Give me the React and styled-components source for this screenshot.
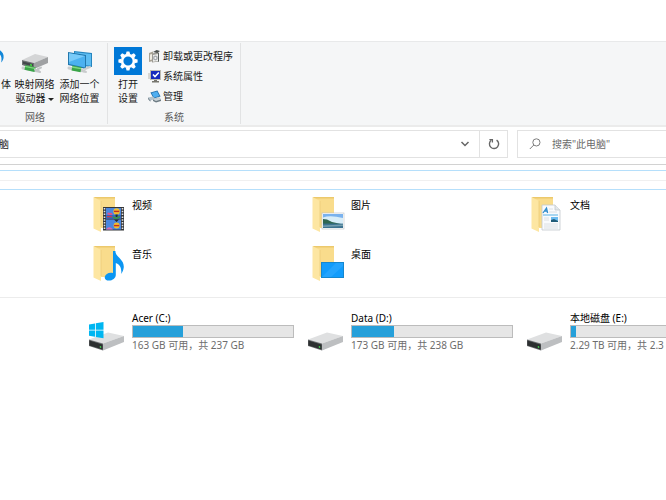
import React from 'react';
import styled, { createGlobalStyle } from 'styled-components';

const folders = [
  { name: '视频', kind: 'video' },
  { name: '图片', kind: 'picture' },
  { name: '文档', kind: 'document' },
  { name: '音乐', kind: 'music' },
  { name: '桌面', kind: 'desktop' },
];

const drives = [
  { name: 'Acer (C:)', info: '163 GB 可用，共 237 GB', used: 31, system: true },
  { name: 'Data (D:)', info: '173 GB 可用，共 238 GB', used: 26 },
  { name: '本地磁盘 (E:)', info: '2.29 TB 可用，共 2.3', used: 3 },
];

/* Icons */

const MediaIcon = () => (
  <svg width="12" height="28" viewBox="0 0 12 28" aria-hidden="true">
    <path d="M0 3.2C2.4 4.8 4 7.4 3.6 10.6C3.4 12.6 2.4 14.4 1.2 15.4C1.8 12 1.6 9 0 7.4Z" fill="#1287d8" />
  </svg>
);

const NetworkDriveIcon = () => (
  <svg width="28" height="28" viewBox="0 0 28 28" aria-hidden="true">
    <path d="M1 13L14 7L27 10L13 16Z" fill="#d4d5d6" />
    <path d="M13 16L27 10V16L13 22Z" fill="#9fa1a3" />
    <path d="M1 13L13 16V22L1 18Z" fill="#6d7072" />
    <path d="M2 14.4L12 17V19.6L2 16.8Z" fill="#43474a" />
    <path d="M9 17l2 .5v1.6l-2-.5z" fill="#3fe03f" />
    <path d="M2 21L17 24" stroke="#c9cbcc" strokeWidth="3" strokeLinecap="round" />
    <path d="M4 20.4L14 22.6" stroke="#3aa548" strokeWidth="5" />
    <path d="M4 19.4L14 21.4" stroke="#7ed67f" strokeWidth="1.4" />
    <path d="M14 22.6L19 25M17 22L20 20.6" stroke="#c2c5c6" strokeWidth="2" strokeLinecap="round" />
  </svg>
);

const NetworkPlaceIcon = () => (
  <svg width="28" height="28" viewBox="0 0 28 28" aria-hidden="true">
    <path d="M8 4L26 6V20L8 18Z" fill="#2585bf" />
    <path d="M9 5.2L25 7V18.8L9 17Z" fill="#5dbdf2" />
    <path d="M2 5L20 8V22L2 18Z" fill="#2277ac" />
    <path d="M3 6.2L19 9V20.6L3 17Z" fill="#4bb1f0" />
    <path d="M3 6.2L19 9L3 15Z" fill="#79cbf9" />
    <path d="M3 21L18 24" stroke="#c9cccd" strokeWidth="3" strokeLinecap="round" />
    <path d="M6 21L15 22.8" stroke="#3aa548" strokeWidth="5" />
    <path d="M6 20L15 21.6" stroke="#82d985" strokeWidth="1.4" />
    <path d="M19 22L24 20M17 24L20 25" stroke="#c9cccd" strokeWidth="2" strokeLinecap="round" />
  </svg>
);

const SettingsIcon = () => (
  <svg width="28" height="28" viewBox="0 0 28 28" aria-hidden="true">
    <rect width="28" height="28" fill="#0078d7" />
    {[0, 45, 90, 135, 180, 225, 270, 315].map((angle) => (
      <path
        key={angle}
        d="M11.8 7.4L12.6 4.4H15.4L16.2 7.4Z"
        fill="#fff"
        transform={`rotate(${angle} 14 14)`}
      />
    ))}
    <circle cx="14" cy="14" r="5.9" fill="none" stroke="#fff" strokeWidth="2.6" />
  </svg>
);

const UninstallIcon = () => (
  <svg width="13" height="13" viewBox="0 0 13 13" aria-hidden="true">
    <path d="M1 3L5 1.5V11L1 12Z" fill="#a8a294" />
    <path d="M2 4.5L4 4V9.6L2 10Z" fill="#efece2" />
    <path d="M4 3.4L10 2L11 3V11.6L4 12.6Z" fill="#9b9a94" />
    <path d="M5 5L10 4V11L5 11.8Z" fill="#efefed" />
    <circle cx="7.4" cy="8" r="2.4" fill="#a7abaf" />
    <circle cx="7.4" cy="8" r="1" fill="#f8f8f8" />
    <path d="M5 2L8.6 0L12 1L9.4 3Z" fill="#4b504e" />
    <path d="M10.5 3V11.6" stroke="#59605e" />
  </svg>
);

const PropertiesIcon = () => (
  <svg width="13" height="13" viewBox="0 0 13 13" aria-hidden="true">
    <path d="M0 4H2M0 6H2M0 8H2" stroke="#b9b6ad" />
    <rect x="2" y="0" width="11" height="10" fill="#bcbab0" />
    <rect x="3" y="1" width="9" height="8" fill="#1629bd" />
    <path d="M5 4.4L7 6.6L10.8 2.4" fill="none" stroke="#fff" strokeWidth="1.5" />
    <path d="M6 10H9V11H11V12.4H4V11H6Z" fill="#77766f" />
  </svg>
);

const ManageIcon = () => (
  <svg width="13" height="13" viewBox="0 0 13 13" aria-hidden="true">
    <path d="M2.4 2.4L9.4 .6L12.6 6.4L5.6 8.4Z" fill="#2673ad" />
    <path d="M3.6 3L9 1.6L11.4 6L6 7.4Z" fill="#4eaef0" />
    <path d="M0 7.6L5 6.4L7.6 9L2.4 10.6Z" fill="#b3c2cb" />
    <path d="M0 7.6L2.4 10.6V11.8L0 9Z" fill="#667782" />
    <path d="M5 9.4L11 7.6L13 9.4V11L8 12.6L5 11Z" fill="#6d7b83" />
    <path d="M5 9.4L11 7.6L13 9.4L8 11Z" fill="#c9d2d6" />
  </svg>
);

const ChevronIcon = () => (
  <svg width="10" height="8" viewBox="0 0 10 8" aria-hidden="true">
    <path d="M1.5 2L5 5.5L8.5 2" fill="none" stroke="#666" strokeWidth="1.5" />
  </svg>
);

const RefreshIcon = () => (
  <svg width="12" height="12" viewBox="0 0 12 12" aria-hidden="true">
    <path d="M8.6 2.1A4.6 4.6 0 1 1 3.2 2.3" fill="none" stroke="#666" strokeWidth="1.4" />
    <path d="M1.4 1.6H4.4V4.6" fill="none" stroke="#666" strokeWidth="1.3" />
  </svg>
);

const SearchIcon = () => (
  <svg width="12" height="12" viewBox="0 0 12 12" aria-hidden="true">
    <circle cx="7.4" cy="4.4" r="3.6" fill="none" stroke="#7c7c7c" />
    <path d="M4.8 7L.8 11" stroke="#7c7c7c" />
  </svg>
);

// What lies over the lower right part of each folder
const overlays = {
  video: (
    <g>
      <rect x="15" y="10" width="21" height="23.5" fill="#343638" />
      <path d="M16.5 11V33M34.5 11V33" stroke="#e4e4e4" strokeWidth="1.6" strokeDasharray="1.5 1.3" />
      <rect x="18" y="11" width="15" height="10.5" fill="#4a86e0" />
      <rect x="18" y="22.5" width="15" height="10" fill="#4a86e0" />
      <path d="M18 18H33V21.5H18Z" fill="#3566c0" />
      <circle cx="28.6" cy="14.4" r="3.2" fill="#f0bd2c" />
      <path d="M26 14.4H31.2" stroke="#c52a24" strokeWidth="1.4" />
      <path d="M27.4 17.6H29.8L29.4 20H27.8Z" fill="#1f3a22" />
      <path d="M19 17Q20 14.6 22 16Q24 15 24.6 17.4Q22 19 19 17Z" fill="#d8538e" />
      <path d="M19 19.6H24" stroke="#c53b4f" strokeWidth="1.4" />
      <path d="M25 20L28 21.4L32 19.6" stroke="#3f9a3c" strokeWidth="1.4" fill="none" />
      <circle cx="28.6" cy="28.6" r="3" fill="#f0bd2c" />
      <path d="M26 28.6H31.2" stroke="#c52a24" strokeWidth="1.4" />
      <path d="M18 32.5Q21 28 25 32.5Z" fill="#d76bb2" />
      <path d="M26 22.5H31L28.6 25Z" fill="#262a28" />
    </g>
  ),
  picture: (
    <g>
      <rect x="15" y="16" width="22" height="16" fill="#fff" stroke="#b9bec2" strokeWidth=".6" />
      <rect x="16" y="17" width="20" height="14" fill="#7ab2ee" />
      <path d="M16 20.5Q23 18 36 21V27H16Z" fill="#d8edf8" />
      <path d="M16 22L20 22.4L25 25L34 27H16Z" fill="#2f6651" />
      <path d="M16 26.6H36V31H16Z" fill="#3c7290" />
      <path d="M16 28.6L36 27.4V29L16 30Z" fill="#759fae" />
    </g>
  ),
  document: (
    <g>
      <path d="M16 8H29L34 13V33H16Z" fill="#f9fbfd" stroke="#c3c9cd" strokeWidth=".8" />
      <path d="M29 8V13H34" fill="#e3e8ec" stroke="#c3c9cd" strokeWidth=".8" />
      <path d="M17 16L20.5 11L21.6 16M18.5 14H21.5" fill="none" stroke="#318ccc" strokeWidth="1.3" />
      <path d="M17 18H32" stroke="#57b0e4" />
      <path d="M23 12H27M23 15H31M18 21H23M18 23H23M18 27H32M18 29H32M18 31H32" stroke="#d6dadd" strokeWidth=".8" />
      <rect x="25" y="20" width="7" height="5" fill="#6bbcf1" />
      <path d="M25 23L28 22L32 24V25H25Z" fill="#205c79" />
    </g>
  ),
  music: (
    <g>
      <path
        d="M25 5H27.4C27.4 11 36 13 35.8 21C35.6 24 34.4 26 33.2 28C34 21 31 18 27.8 17V29C27.8 32 24.6 34.6 21 34.6C18 34.6 16.4 33 16.8 30.8C17.4 27.8 21 26 25 27Z"
        fill="#0c96f2"
      />
    </g>
  ),
  desktop: (
    <g>
      <rect x="14" y="16" width="23" height="16" fill="#1587cf" />
      <rect x="15" y="17" width="21" height="14" fill="#129cfb" />
      <path d="M15 31L29 17H36V20L24 31Z" fill="#24a4fd" />
    </g>
  ),
};

const FolderIcon = ({ kind }) => (
  <svg width="38" height="36" viewBox="0 0 38 36" aria-hidden="true">
    <path d="M6 0H27V31H12Z" fill="#ecc96c" />
    <path d="M8 1.4H27V31H12Z" fill="#f9dc8c" />
    <path d="M5.5 0L13 4V35L5.5 31.4Z" fill="#fde6a2" />
    <path d="M13 4V30" stroke="#e9c875" strokeWidth=".7" />
    {overlays[kind]}
  </svg>
);

const DriveIcon = ({ system }) => (
  <svg width="38" height="30" viewBox="0 0 38 30" aria-hidden="true">
    <path d="M1 18.6L20 11.6L36 15L15 22.6Z" fill="#dfe0e1" />
    <path d="M15 22.6L36 15V21L15 29.4Z" fill="#bdbfc1" />
    <path d="M1 18.6L15 22.6V29.4L1 25Z" fill="#6c6f71" />
    <path d="M1.4 19.6L14.6 23.4V28.4L1.4 24.4Z" fill="#2c2f30" />
    <path d="M11.8 25L13.2 25.4V27L11.8 26.5Z" fill="#45e352" />
    {system && (
      <g fill="#00b6f1">
        <path d="M1 3.4L7 2.4V8.8H1Z" />
        <path d="M7.8 2.2L15.5 1V8.8H7.8Z" />
        <path d="M1 9.6H7V15.8L1 14.8Z" />
        <path d="M7.8 9.6H15.5V17.2L7.8 16Z" />
      </g>
    )}
  </svg>
);

/* Page */

const App = () => (
  <>
    <GlobalStyle />
    <Window>
      <Ribbon>
        <Group>
          <Tools>
            <CutButton type="button">
              <MediaIcon />
              <span>体</span>
            </CutButton>
            <BigButton type="button">
              <NetworkDriveIcon />
              <span>映射网络</span>
              <span>
                驱动器
                <Caret />
              </span>
            </BigButton>
            <BigButton type="button">
              <NetworkPlaceIcon />
              <span>添加一个</span>
              <span>网络位置</span>
            </BigButton>
          </Tools>
          <GroupName $shift>网络</GroupName>
        </Group>
        <Group>
          <Tools $inset>
            <SettingsButton type="button">
              <SettingsIcon />
              <span>打开</span>
              <span>设置</span>
            </SettingsButton>
            <SmallList>
              <SmallButton type="button">
                <UninstallIcon />
                卸载或更改程序
              </SmallButton>
              <SmallButton type="button">
                <PropertiesIcon />
                系统属性
              </SmallButton>
              <SmallButton type="button">
                <ManageIcon />
                管理
              </SmallButton>
            </SmallList>
          </Tools>
          <GroupName>系统</GroupName>
        </Group>
      </Ribbon>

      <Navigation>
        <AddressBox>
          <AddressInput type="text" aria-label="地址" defaultValue="脑" />
          <IconButton type="button" aria-label="展开">
            <ChevronIcon />
          </IconButton>
          <IconButton type="button" aria-label="刷新" $divided>
            <RefreshIcon />
          </IconButton>
        </AddressBox>
        <SearchBox>
          <SearchIcon />
          <SearchInput type="text" aria-label="搜索" placeholder={'搜索"此电脑"'} />
        </SearchBox>
      </Navigation>

      <HeaderBand />

      <FolderGrid>
        {folders.map((folder) => (
          <Folder key={folder.name}>
            <FolderIcon kind={folder.kind} />
            <FolderName>{folder.name}</FolderName>
          </Folder>
        ))}
      </FolderGrid>

      <DriveGrid>
        {drives.map((drive) => (
          <Drive key={drive.name}>
            <DriveIcon system={drive.system} />
            <DriveBody>
              <DriveName>{drive.name}</DriveName>
              <Bar>
                <BarFill style={{ width: `${drive.used}%` }} />
              </Bar>
              <DriveInfo>{drive.info}</DriveInfo>
            </DriveBody>
          </Drive>
        ))}
      </DriveGrid>
    </Window>
  </>
);

/* Styles */

const GlobalStyle = createGlobalStyle`
  * {
    box-sizing: border-box;
  }

  body {
    margin: 0;
    background: #fff;
    color: #1a1a1a;
    font-family: 'Noto Sans', 'Noto Sans CJK SC', sans-serif;
    font-size: 10px;
    line-height: 14px;
  }

  button,
  input {
    padding: 0;
    border: 0;
    background: none;
    color: inherit;
    font: inherit;
  }

  svg {
    display: block;
    flex-shrink: 0;
  }
`;

const Window = styled.main`
  padding-top: 41px;
  overflow: hidden;
`;

const Ribbon = styled.div`
  display: flex;
  padding: 1px 0;
  background: #f5f6f7;
  border-top: 1px solid #e8e9ea;
  border-bottom: 2px solid #ebebeb;
`;

const Group = styled.section`
  display: flex;
  flex-direction: column;
  justify-content: space-between;
  height: 81px;
  padding-top: 4px;
  border-right: 1px solid #e2e3e4;
`;

const Tools = styled.div`
  display: flex;
  padding: ${({ $inset }) => ($inset ? '0 7px 0 6px' : '0 5px 0 0')};
`;

const BigButton = styled.button`
  display: flex;
  flex-direction: column;
  align-items: center;
  width: 45px;
  white-space: nowrap;

  svg {
    margin-bottom: 2px;
  }
`;

const CutButton = styled(BigButton)`
  width: 12px;
`;

const SettingsButton = styled(BigButton)`
  width: 28px;
  margin-right: 6px;
`;

const Caret = styled.i`
  display: inline-block;
  margin-left: 2px;
  border: 3px solid transparent;
  border-top-color: #222;
  border-bottom: 0;
  vertical-align: middle;
`;

const SmallList = styled.div`
  display: flex;
  flex-direction: column;
`;

const SmallButton = styled.button`
  display: flex;
  align-items: center;
  gap: 2px;
  height: 20px;
  padding-bottom: 2px;
  white-space: nowrap;
`;

const GroupName = styled.div`
  padding-right: ${({ $shift }) => ($shift ? '37px' : 0)};
  color: #5a5a5a;
  text-align: center;
`;

const Navigation = styled.div`
  display: flex;
  gap: 9px;
  padding: 3px 0 6px;
  border-bottom: 1px solid #d2d2d2;
`;

const AddressBox = styled.div`
  display: flex;
  flex: 1;
  height: 28px;
  margin-left: -2px;
  border: 1px solid #e2e2e2;
`;

const AddressInput = styled.input`
  flex: 1;
  min-width: 0;
  outline: none;
`;

const IconButton = styled.button`
  display: flex;
  align-items: center;
  justify-content: center;
  width: 28px;
  border-left: ${({ $divided }) => ($divided ? '1px solid #e2e2e2' : 0)};
`;

const SearchBox = styled.div`
  display: flex;
  align-items: center;
  gap: 11px;
  width: 149px;
  padding-left: 11px;
  border: 1px solid #e2e2e2;
  border-right: 0;
`;

const SearchInput = styled.input`
  flex: 1;
  min-width: 0;
  outline: none;

  &::placeholder {
    color: #6b6b6b;
    opacity: 1;
  }
`;

const HeaderBand = styled.div`
  height: 20px;
  margin-top: 5px;
  border: solid #b5dffb;
  border-width: 1px 0;
  background: linear-gradient(#f0f0f0, #f0f0f0) 0 9px / 100% 1px no-repeat;
`;

const TileGrid = styled.div`
  display: grid;
  grid-template-columns: repeat(3, 219px);
  padding-left: 88px;
`;

const FolderGrid = styled(TileGrid)`
  row-gap: 13px;
  padding-top: 7px;
  padding-bottom: 15px;
  border-bottom: 1px solid #ececec;
`;

const Folder = styled.div`
  display: flex;
  gap: 6px;
`;

const FolderName = styled.span`
  padding-top: 1px;
  color: #000;
`;

const DriveGrid = styled(TileGrid)`
  padding-top: 13px;
`;

const Drive = styled.div`
  display: flex;
  gap: 6px;

  > svg {
    margin-top: 10px;
  }
`;

const DriveBody = styled.div`
  width: 162px;
  white-space: nowrap;
`;

const DriveName = styled.div`
  color: #000;
`;

const Bar = styled.div`
  height: 13px;
  border: 1px solid #bcbcbc;
  background: #e6e6e6;
`;

const BarFill = styled.div`
  height: 100%;
  background: #26a0da;
`;

const DriveInfo = styled.div`
  color: #6d6d6d;
`;

export default App;
